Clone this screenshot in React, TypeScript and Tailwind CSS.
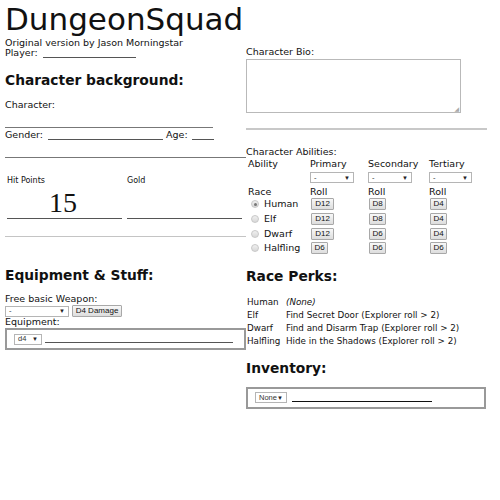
import React from "react";

const F = { fontFamily: '"DejaVu Sans", Verdana, sans-serif' };
const A = { fontFamily: '"Liberation Sans", Arial, sans-serif' };

function Sel({ w, label }: { w: number; label: string }) {
  return (
    <div
      className="flex items-center justify-between border border-[#b5b5b5] bg-white h-[11px] px-[3px] box-border"
      style={{ width: w, ...A }}
    >
      <span className="text-[7.5px] leading-none text-[#333]">{label}</span>
      <span className="text-[6px] leading-none text-[#222]">▼</span>
    </div>
  );
}

function Btn({ children, w }: { children: React.ReactNode; w: number }) {
  return (
    <div
      className="flex items-center justify-center h-[12px] border border-[#a8a8a8] rounded-[1px] bg-gradient-to-b from-[#f8f8f8] to-[#dddddd] text-[8px] leading-none text-[#111] box-border"
      style={{ width: w, ...A }}
    >
      {children}
    </div>
  );
}

function Radio({ checked }: { checked?: boolean }) {
  return (
    <div className="w-[8px] h-[8px] rounded-full border border-[#c8c8c8] bg-gradient-to-b from-[#f0f0f0] to-[#d8d8d8] flex items-center justify-center">
      {checked && <div className="w-[3px] h-[3px] rounded-full bg-[#777]" />}
    </div>
  );
}

export default function App() {
  const rows = [
    { r: "Human", c: true, a: "D12", b: "D8", t: "D4" },
    { r: "Elf", a: "D12", b: "D8", t: "D4" },
    { r: "Dwarf", a: "D12", b: "D6", t: "D4" },
    { r: "Halfling", a: "D6", b: "D6", t: "D6" },
  ];
  const perks = [
    ["Human", "(None)"],
    ["Elf", "Find Secret Door (Explorer roll > 2)"],
    ["Dwarf", "Find and Disarm Trap (Explorer roll > 2)"],
    ["Halfling", "Hide in the Shadows (Explorer roll > 2)"],
  ];
  return (
    <div className="w-[500px] h-[500px] bg-white text-[#111] flex" style={F}>
      {/* Left column */}
      <div className="w-[241px] ml-[5px] flex flex-col">
        <div className="text-[31px] leading-[38px] h-[38px]">DungeonSquad</div>
        <div className="text-[9.5px] leading-[10px] h-[10px]">Original version by Jason Morningstar</div>
        <div className="flex items-end text-[9.5px] leading-[10px] h-[10px]">
          <span>Player:</span>
          <span className="ml-[5px] w-[93px] border-b border-[#555] h-[9px]" />
        </div>
        <div className="mt-[13px] text-[13.8px] font-bold leading-[18px] h-[18px]">Character background:</div>
        <div className="mt-[11px] text-[9.5px] leading-[10px] h-[10px]">Character:</div>
        <div className="mt-[17px] w-[208px] border-b border-[#777]" />
        <div className="mt-[2px] flex items-end text-[9.5px] leading-[10px] h-[10px]">
          <span>Gender:</span>
          <span className="ml-[5px] w-[115px] border-b border-[#555] h-[9px]" />
          <span className="ml-[3px]">Age:</span>
          <span className="ml-[4px] w-[22px] border-b border-[#555] h-[9px]" />
        </div>
        <div className="mt-[17px] w-[241px] border-b border-[#777]" />
        <div className="mt-[18px] flex text-[8px] leading-[10px]">
          <div className="w-[120px] pl-[2px]">Hit Points</div>
          <div className="pl-[2px]">Gold</div>
        </div>
        <div className="flex mt-[5px]">
          <div className="w-[115px] ml-[2px] border-b border-[#555] h-[28px] pl-[42px] text-[28px] leading-[24px]" style={{ fontFamily: '"Liberation Serif", serif' }}>
            15
          </div>
          <div className="w-[115px] ml-[5px] border-b border-[#555] h-[28px]" />
        </div>
        <div className="mt-[17px] w-[241px] border-b border-[#c4c4c4]" />
        <div className="mt-[29px] text-[13.8px] font-bold leading-[18px] h-[18px]">Equipment &amp; Stuff:</div>
        <div className="mt-[10px] text-[9.5px] leading-[10px] h-[10px]">Free basic Weapon:</div>
        <div className="mt-[1px] flex items-center gap-[3px]">
          <Sel w={64} label="-" />
          <Btn w={50}>D4 Damage</Btn>
        </div>
        <div className="mt-0 text-[9.5px] leading-[10px] h-[10px]">Equipment:</div>
        <div className="mt-[1px] w-[241px] h-[22px] border-2 border-[#999] box-border flex items-center pl-[7px]">
          <Sel w={28} label="d4" />
          <span className="ml-[3px] w-[188px] border-b border-[#555] h-[8px]" />
        </div>
      </div>

      {/* Right column */}
      <div className="w-[244px] flex flex-col">
        <div className="mt-[47px] text-[9.5px] leading-[10px] h-[10px]">Character Bio:</div>
        <div className="mt-[2px] w-[215px] h-[54px] border border-[#b9b9b9] relative">
          <span className="absolute right-[1px] bottom-[0px] text-[6px] leading-none text-[#aaa]">◢</span>
        </div>
        <div className="mt-[15px] w-[241px] border-b-2 border-[#c8c8c8]" />
        <div className="mt-[17px] text-[9.5px] leading-[10px] h-[10px]">Character Abilities:</div>
        <div className="flex flex-col text-[9.5px] leading-[10px] pl-[2px]">
          <div className="flex mt-[2px]">
            <div className="w-[62px]">Ability</div>
            <div className="w-[58px]">Primary</div>
            <div className="w-[61px]">Secondary</div>
            <div>Tertiary</div>
          </div>
          <div className="flex mt-[3px]">
            <div className="w-[62px]" />
            <div className="w-[58px]"><Sel w={44} label="-" /></div>
            <div className="w-[61px]"><Sel w={44} label="-" /></div>
            <div><Sel w={43} label="-" /></div>
          </div>
          <div className="flex mt-[4px]">
            <div className="w-[62px]">Race</div>
            <div className="w-[58px]">Roll</div>
            <div className="w-[61px]">Roll</div>
            <div>Roll</div>
          </div>
          {rows.map((r) => (
            <div key={r.r} className="flex items-center h-[14.7px]">
              <div className="w-[63px] flex items-center pl-[3px] gap-[5px]">
                <Radio checked={r.c} />
                <span>{r.r}</span>
              </div>
              <div className="w-[58px]"><Btn w={r.a === "D6" ? 17 : 23}>{r.a}</Btn></div>
              <div className="w-[61px]"><Btn w={17}>{r.b}</Btn></div>
              <div><Btn w={17}>{r.t}</Btn></div>
            </div>
          ))}
        </div>
        <div className="mt-[11px] text-[13.8px] font-bold leading-[18px] h-[18px]">Race Perks:</div>
        <div className="mt-[11px] flex flex-col text-[8.75px] leading-[13px] pl-[1px]">
          {perks.map(([a, b]) => (
            <div key={a} className="flex">
              <div className="w-[39px]">{a}</div>
              <div className={a === "Human" ? "italic" : ""}>{b}</div>
            </div>
          ))}
        </div>
        <div className="mt-[11px] text-[13.8px] font-bold leading-[18px] h-[18px]">Inventory:</div>
        <div className="mt-[10px] w-[240px] h-[22px] border-2 border-[#999] box-border flex items-center pl-[7px]">
          <Sel w={32} label="None" />
          <span className="ml-[5px] w-[140px] border-b border-[#111] h-[8px]" />
        </div>
      </div>
    </div>
  );
}
